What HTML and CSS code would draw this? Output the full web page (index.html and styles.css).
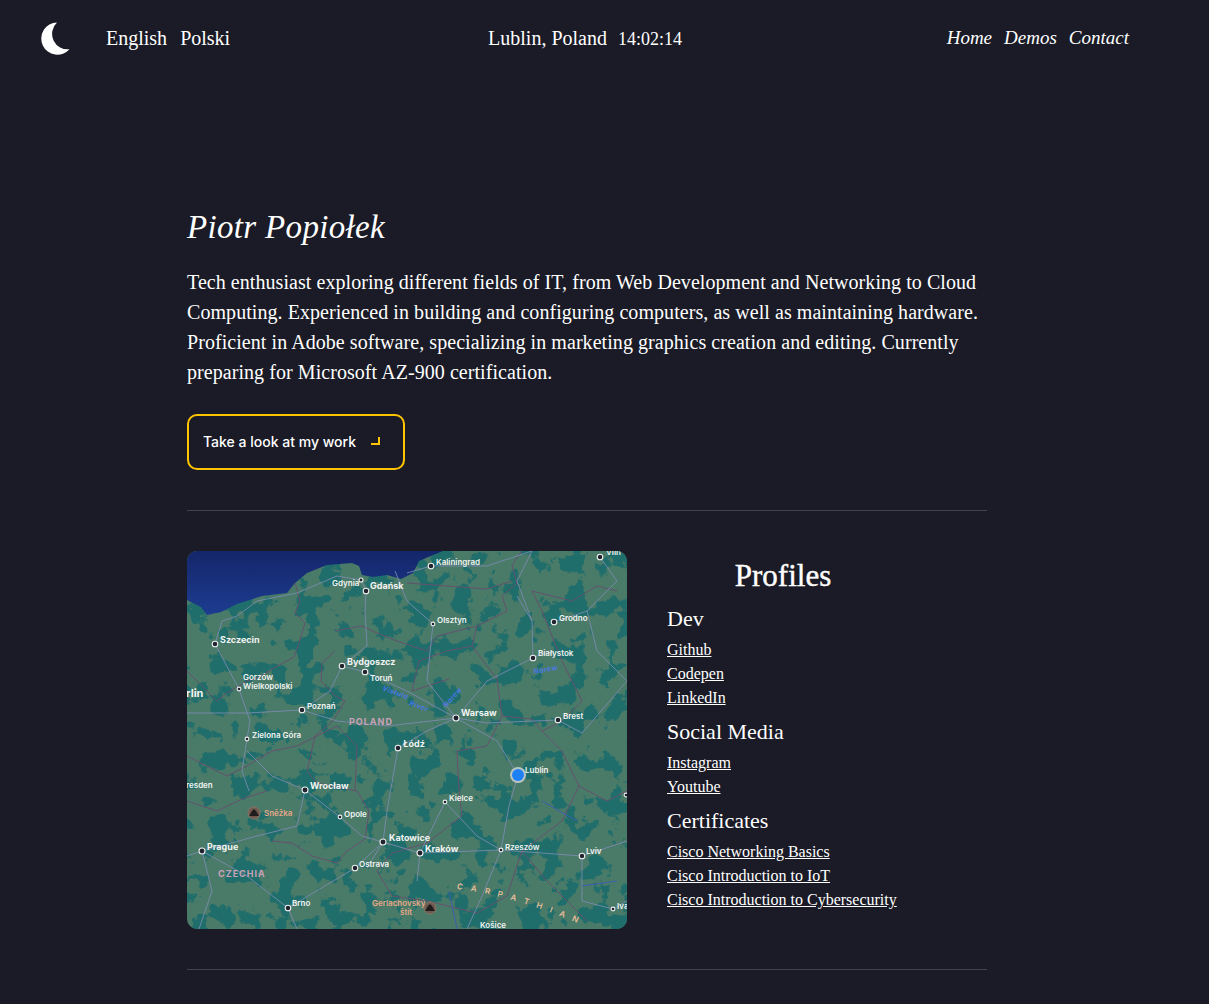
FILE: index.html
```html
<!DOCTYPE html>
<html lang="en">
<head>
<meta charset="utf-8">
<title>Piotr Popiołek</title>
<link rel="stylesheet" href="styles.css">
</head>
<body>
<div class="page">

  <header class="topbar">
    <div class="topbar-left">
      <svg class="moon" width="30" height="33" viewBox="0 0 30 33">
        <path d="M16 0.5 A16.1 16.1 0 1 0 28.5 27.2 A15.5 15.5 0 0 1 16 0.5 Z" fill="#fff"/>
      </svg>
      <nav class="lang">
        <a href="#en">English</a>
        <a href="#pl">Polski</a>
      </nav>
    </div>
    <div class="clock"><span>Lublin, Poland</span><span class="time">14:02:14</span></div>
    <nav class="menu">
      <a href="#home">Home</a>
      <a href="#demos">Demos</a>
      <a href="#contact">Contact</a>
    </nav>
  </header>

  <main class="content">
    <section class="intro">
      <h1>Piotr Popiołek</h1>
      <p>Tech enthusiast exploring different fields of IT, from Web Development and Networking to Cloud Computing. Experienced in building and configuring computers, as well as maintaining hardware. Proficient in Adobe software, specializing in marketing graphics creation and editing. Currently preparing for Microsoft AZ-900 certification.</p>
      <a class="work-btn" href="#demos">Take a look at my work<i class="corner"></i></a>
    </section>

    <section class="about">
      <svg class="map" width="440" height="378" viewBox="0 0 440 378">
        <defs>
          <filter id="forest" x="0" y="0" width="100%" height="100%" color-interpolation-filters="sRGB">
            <feTurbulence type="fractalNoise" baseFrequency="0.045" numOctaves="5" seed="23"/>
            <feColorMatrix type="matrix" values="0 0 0 0 0.12  0 0 0 0 0.43  0 0 0 0 0.42  22 0 0 0 -11.9"/>
          </filter>
          <linearGradient id="sea" x1="0" y1="0" x2="0" y2="1">
            <stop offset="0" stop-color="#14266a"/>
            <stop offset="1" stop-color="#1d3c90"/>
          </linearGradient>
          <path id="carpath" d="M270 338 Q330 345 404 378"/>
        </defs>
        <rect width="440" height="378" fill="#4a7a68"/>
        <rect width="440" height="378" filter="url(#forest)"/>

        <!-- sea -->
        <path d="M0 0 L0 49 L14 56 L20 64 L34 61 L50 53 L75 45 L100 42 L108 32 L120 22 L140 14 L165 12 L172 15 L175 24 L186 26 L200 24 L214 28 L226 22 L232 10 L246 4 L256 0 Z" fill="url(#sea)"/>

        <!-- borders -->
        <g class="borders">
          <path d="M108 32 L113 50 L108 62 L118 72 L112 92 L107 106 L85 118 L75 125 L60 130 L40 142 L30 150 L0 120"/>
          <path d="M148 100 L135 112 L134 130 L148 145 L158 150 L146 170 L128 185 L120 220 L130 232 L170 240 L182 260 L178 288 L160 300 L150 312 L125 305 L105 292 L85 290"/>
          <path d="M148 80 L175 75 L190 82 L210 90 L240 100 L250 85 L290 75 L320 60 L315 45 L330 32 L325 14 L335 0"/>
          <path d="M290 75 L285 95 L300 115 L310 128 L315 165 L345 168 L355 180 L375 170 L395 150 L375 110 L355 60 L345 40 L385 50 L410 35 L430 40"/>
          <path d="M285 95 L260 100 L232 110 L225 140 L262 128"/>
          <path d="M220 32 L300 38 L325 30"/>
          <path d="M315 165 L300 195 L270 200 L272 240 L275 265 L240 292 L205 302 L190 320 L205 345 L240 350 L290 362 L320 345 L335 300 L375 270 L392 235 L375 200 L355 180"/>
          <path d="M0 205 L40 225 L60 215 L85 200 L110 195 L150 175 L170 195 L168 240"/>
          <path d="M0 250 L30 260 L55 248 L80 240"/>
          <path d="M335 300 L360 330 L400 370 M392 235 L420 250 L440 240"/>
        </g>

        <!-- roads -->
        <g class="roads">
          <path d="M28 93 L35 70 L50 65 L70 50 L110 42 L150 25 L174 29 L179 40 L178 60 L180 95 L155 115 L143 140 L115 159"/>
          <path d="M0 162 L60 162 L115 159 L150 170 L200 175 L269 167"/>
          <path d="M269 167 L300 130 L346 107 L345 70 L330 45 M346 107 L360 100"/>
          <path d="M269 167 L300 172 L371 169 L395 182 L440 130"/>
          <path d="M28 93 L52 138 L63 170 L60 188 L55 220 L62 240"/>
          <path d="M118 239 L85 225 L60 200 M118 239 L110 275 L70 285 L15 300 L0 305"/>
          <path d="M118 239 L153 266 L175 285 L196 291 L233 302 L314 299 L395 305 L440 290"/>
          <path d="M269 167 L310 190 L331 224 L322 255 L314 299 L295 345 L280 378"/>
          <path d="M269 167 L240 180 L211 197 L200 260 L196 291 L180 317"/>
          <path d="M269 167 L240 130 L246 73 L220 50 L208 20"/>
          <path d="M367 71 L400 60 L430 30 L413 6 M400 60 L410 100 L440 130"/>
          <path d="M220 22 L244 15 L300 15 L345 0 L330 30 L345 70"/>
          <path d="M15 300 L60 325 L101 357 L168 317 L196 291 M101 357 L110 378"/>
          <path d="M395 305 L395 350 L426 358 L440 350 M15 300 L25 340 L12 378"/>
          <path d="M258 251 L290 285 L314 299 M258 251 L233 302 L230 330"/>
          <path d="M155 115 L178 121 L220 140 L269 167"/>
        </g>

        <!-- rivers -->
        <g class="rivers">
          <path d="M355 250 L390 270 M270 378 L262 340 M395 335 L430 330"/>
        </g>
        <text class="water" transform="translate(195 139) rotate(20)">Vistula</text>
        <text class="water" transform="translate(222 154) rotate(20)">River</text>
        <text class="water" transform="translate(259 157) rotate(-48)">Narew</text>
        <text class="water" transform="translate(347 123) rotate(-10)">Narew</text>

        <!-- places -->
        <g class="dots">
          <circle cx="174" cy="29" r="2"/><circle cx="179" cy="40" r="2.8"/><circle cx="28" cy="93" r="2.8"/>
          <circle cx="52" cy="138" r="1.9"/><circle cx="155" cy="115" r="2.8"/><circle cx="178" cy="121" r="2.8"/>
          <circle cx="115" cy="159" r="2.8"/><circle cx="60" cy="188" r="1.9"/><circle cx="244" cy="15" r="2.8"/>
          <circle cx="413" cy="6" r="2.8"/><circle cx="246" cy="73" r="1.9"/><circle cx="367" cy="71" r="2.8"/>
          <circle cx="346" cy="107" r="2.8"/><circle cx="269" cy="167" r="3"/><circle cx="371" cy="169" r="2.8"/>
          <circle cx="118" cy="239" r="3"/><circle cx="153" cy="266" r="1.9"/><circle cx="15" cy="300" r="3"/>
          <circle cx="168" cy="317" r="2.8"/><circle cx="101" cy="357" r="2.8"/><circle cx="196" cy="291" r="3"/>
          <circle cx="211" cy="197" r="2.8"/><circle cx="258" cy="251" r="1.9"/><circle cx="233" cy="302" r="3"/>
          <circle cx="314" cy="299" r="1.9"/><circle cx="395" cy="305" r="2.8"/><circle cx="426" cy="358" r="1.9"/>
          <circle cx="439" cy="244" r="1.9"/>
        </g>
        <g class="labels">
          <text x="145" y="35">Gdynia</text>
          <text class="big" x="183" y="38">Gdańsk</text>
          <text class="big" x="33" y="92">Szczecin</text>
          <text x="56" y="129">Gorzów</text>
          <text x="56" y="138">Wielkopolski</text>
          <text class="big" x="160" y="114">Bydgoszcz</text>
          <text x="183" y="130">Toruń</text>
          <text x="120" y="158">Poznań</text>
          <text x="65" y="187">Zielona Góra</text>
          <text class="city" x="-1" y="146">rlin</text>
          <text x="249" y="14">Kaliningrad</text>
          <text x="419" y="4">Viln</text>
          <text x="250" y="72">Olsztyn</text>
          <text x="372" y="70">Grodno</text>
          <text x="351" y="105">Białystok</text>
          <text class="big" x="274" y="165">Warsaw</text>
          <text x="376" y="168">Brest</text>
          <text x="-1" y="237">resden</text>
          <text class="big" x="123" y="238">Wrocław</text>
          <text x="157" y="266">Opole</text>
          <text class="big" x="20" y="299">Prague</text>
          <text x="172" y="316">Ostrava</text>
          <text x="105" y="355">Brno</text>
          <text class="big" x="202" y="290">Katowice</text>
          <text class="big" x="216" y="196">Łódź</text>
          <text x="262" y="250">Kielce</text>
          <text class="big" x="238" y="301">Kraków</text>
          <text x="318" y="299">Rzeszów</text>
          <text x="399" y="303">Lviv</text>
          <text x="430" y="358">Iva</text>
          <text x="293" y="377">Košice</text>
          <text x="338" y="222">Lublin</text>
        </g>
        <text class="region" x="162" y="174">POLAND</text>
        <text class="region" x="31" y="326">CZECHIA</text>
        <text class="range"><textPath href="#carpath">C A R P A T H I A N</textPath></text>

        <g class="peak">
          <circle cx="67" cy="262" r="6"/><path d="M62 265 L65 260 L67 258 L69 260 L72 265 Z"/>
          <circle cx="243" cy="357" r="6"/><path d="M238 360 L241 355 L243 353 L245 355 L248 360 Z"/>
        </g>
        <text class="peak-name" x="77" y="265">Sněžka</text>
        <text class="peak-name" x="185" y="355">Gerlachovský</text>
        <text class="peak-name" x="213" y="364">štít</text>

        <circle cx="331" cy="224" r="8" fill="#b9c6c4"/>
        <circle cx="331" cy="224" r="6" fill="#1e80f5"/>
      </svg>

      <div class="profiles">
        <h2>Profiles</h2>
        <h3>Dev</h3>
        <ul>
          <li><a href="#github">Github</a></li>
          <li><a href="#codepen">Codepen</a></li>
          <li><a href="#linkedin">LinkedIn</a></li>
        </ul>
        <h3>Social Media</h3>
        <ul>
          <li><a href="#instagram">Instagram</a></li>
          <li><a href="#youtube">Youtube</a></li>
        </ul>
        <h3>Certificates</h3>
        <ul>
          <li><a href="#cert1">Cisco Networking Basics</a></li>
          <li><a href="#cert2">Cisco Introduction to IoT</a></li>
          <li><a href="#cert3">Cisco Introduction to Cybersecurity</a></li>
        </ul>
      </div>
    </section>
  </main>

</div>
</body>
</html>
```

FILE: styles.css
```css
* {
  box-sizing: border-box;
}

html, body {
  margin: 0;
  padding: 0;
}

body {
  background-color: #1a1b26;
  color: #fff;
  font-family: "Liberation Serif", "DejaVu Serif", serif;
  height: 1004px;
  overflow: hidden;
}

a {
  color: inherit;
  text-decoration: none;
}

.page {
  width: 1174px;
}

/* top bar */
.topbar {
  display: grid;
  grid-template-columns: 1fr auto 1fr;
  align-items: center;
  height: 76px;
  padding: 0 45px 0 41px;
  font-size: 20px;
}

.topbar-left {
  display: flex;
  align-items: center;
}

.moon {
  display: block;
  margin-right: 35px;
}

.lang {
  display: flex;
  gap: 13px;
}

.clock {
  display: flex;
  align-items: baseline;
  gap: 11px;
}

.time {
  font-size: 18px;
}

.menu {
  display: flex;
  justify-content: flex-end;
  gap: 12px;
  font-size: 19px;
  font-style: italic;
}

/* main column */
.content {
  width: 800px;
  margin: 0 auto;
}

.intro {
  padding-top: 127px;
  padding-bottom: 40px;
  border-bottom: 1px solid #43434d;
}

.intro h1 {
  margin: 0 0 16px;
  font-size: 33px;
  line-height: 48px;
  font-weight: 400;
  font-style: italic;
  letter-spacing: 0.33px;
}

.intro p {
  margin: 0 0 27px;
  font-size: 20px;
  line-height: 30px;
  letter-spacing: 0.06px;
}

.work-btn {
  display: flex;
  align-items: center;
  justify-content: space-between;
  width: 218px;
  height: 56px;
  padding: 0 23px 2px 14px;
  border: 2px solid #ffc400;
  border-radius: 10px;
  font-family: Inter, "Liberation Sans", sans-serif;
  font-size: 14px;
  font-weight: 500;
}

.corner {
  display: block;
  width: 9px;
  height: 8px;
  border-right: 2px solid #ffc400;
  border-bottom: 2px solid #ffc400;
}

.about {
  display: flex;
  gap: 40px;
  padding: 40px 0;
  border-bottom: 1px solid #43434d;
}

/* map */
.map {
  display: block;
  flex: none;
  border-radius: 10px;
}

.map text {
  font-family: Inter, "Liberation Sans", sans-serif;
}

.borders path {
  fill: none;
  stroke: #65526e;
  stroke-width: 1;
}

.roads path {
  fill: none;
  stroke: #7c8cb2;
  stroke-width: 1;
  stroke-opacity: 0.85;
}

.rivers path {
  fill: none;
  stroke: #3d5fb0;
  stroke-width: 1;
}

.dots circle {
  fill: #20242f;
  stroke: #eef0ee;
  stroke-width: 1.1;
}

.labels text {
  fill: #f1f4f2;
  font-size: 8px;
  font-weight: 600;
}

.labels .big {
  font-size: 9px;
  font-weight: 700;
}

.labels .city {
  font-size: 11px;
  font-weight: 700;
}

.map .water {
  fill: #4a78f0;
  font-size: 7px;
  font-style: italic;
  font-weight: 600;
  letter-spacing: 0.5px;
}

.map .region {
  fill: #c9a3b8;
  font-size: 9px;
  font-weight: 700;
  letter-spacing: 1px;
}

.map .range {
  fill: #e8bd9a;
  font-size: 8px;
  font-weight: 600;
  letter-spacing: 3px;
}

.peak circle {
  fill: #6e5a50;
  stroke: #8b7465;
}

.peak path {
  fill: #211c1c;
}

.map .peak-name {
  fill: #e5a888;
  font-size: 8px;
  font-weight: 600;
}

/* profiles list */
.profiles {
  width: 232px;
  padding-top: 5px;
}

.profiles h2 {
  margin: 0 0 8px;
  font-size: 31px;
  line-height: 40px;
  font-weight: 400;
  text-align: center;
  -webkit-text-stroke: 0.4px #fff;
}

.profiles h3 {
  margin: 0;
  font-size: 22px;
  line-height: 30px;
  font-weight: 400;
}

.profiles ul {
  list-style: none;
  margin: 4px 0 7px;
  padding: 0;
}

.profiles li {
  font-size: 16px;
  line-height: 24px;
}

.profiles li a {
  text-decoration: underline;
}
```
